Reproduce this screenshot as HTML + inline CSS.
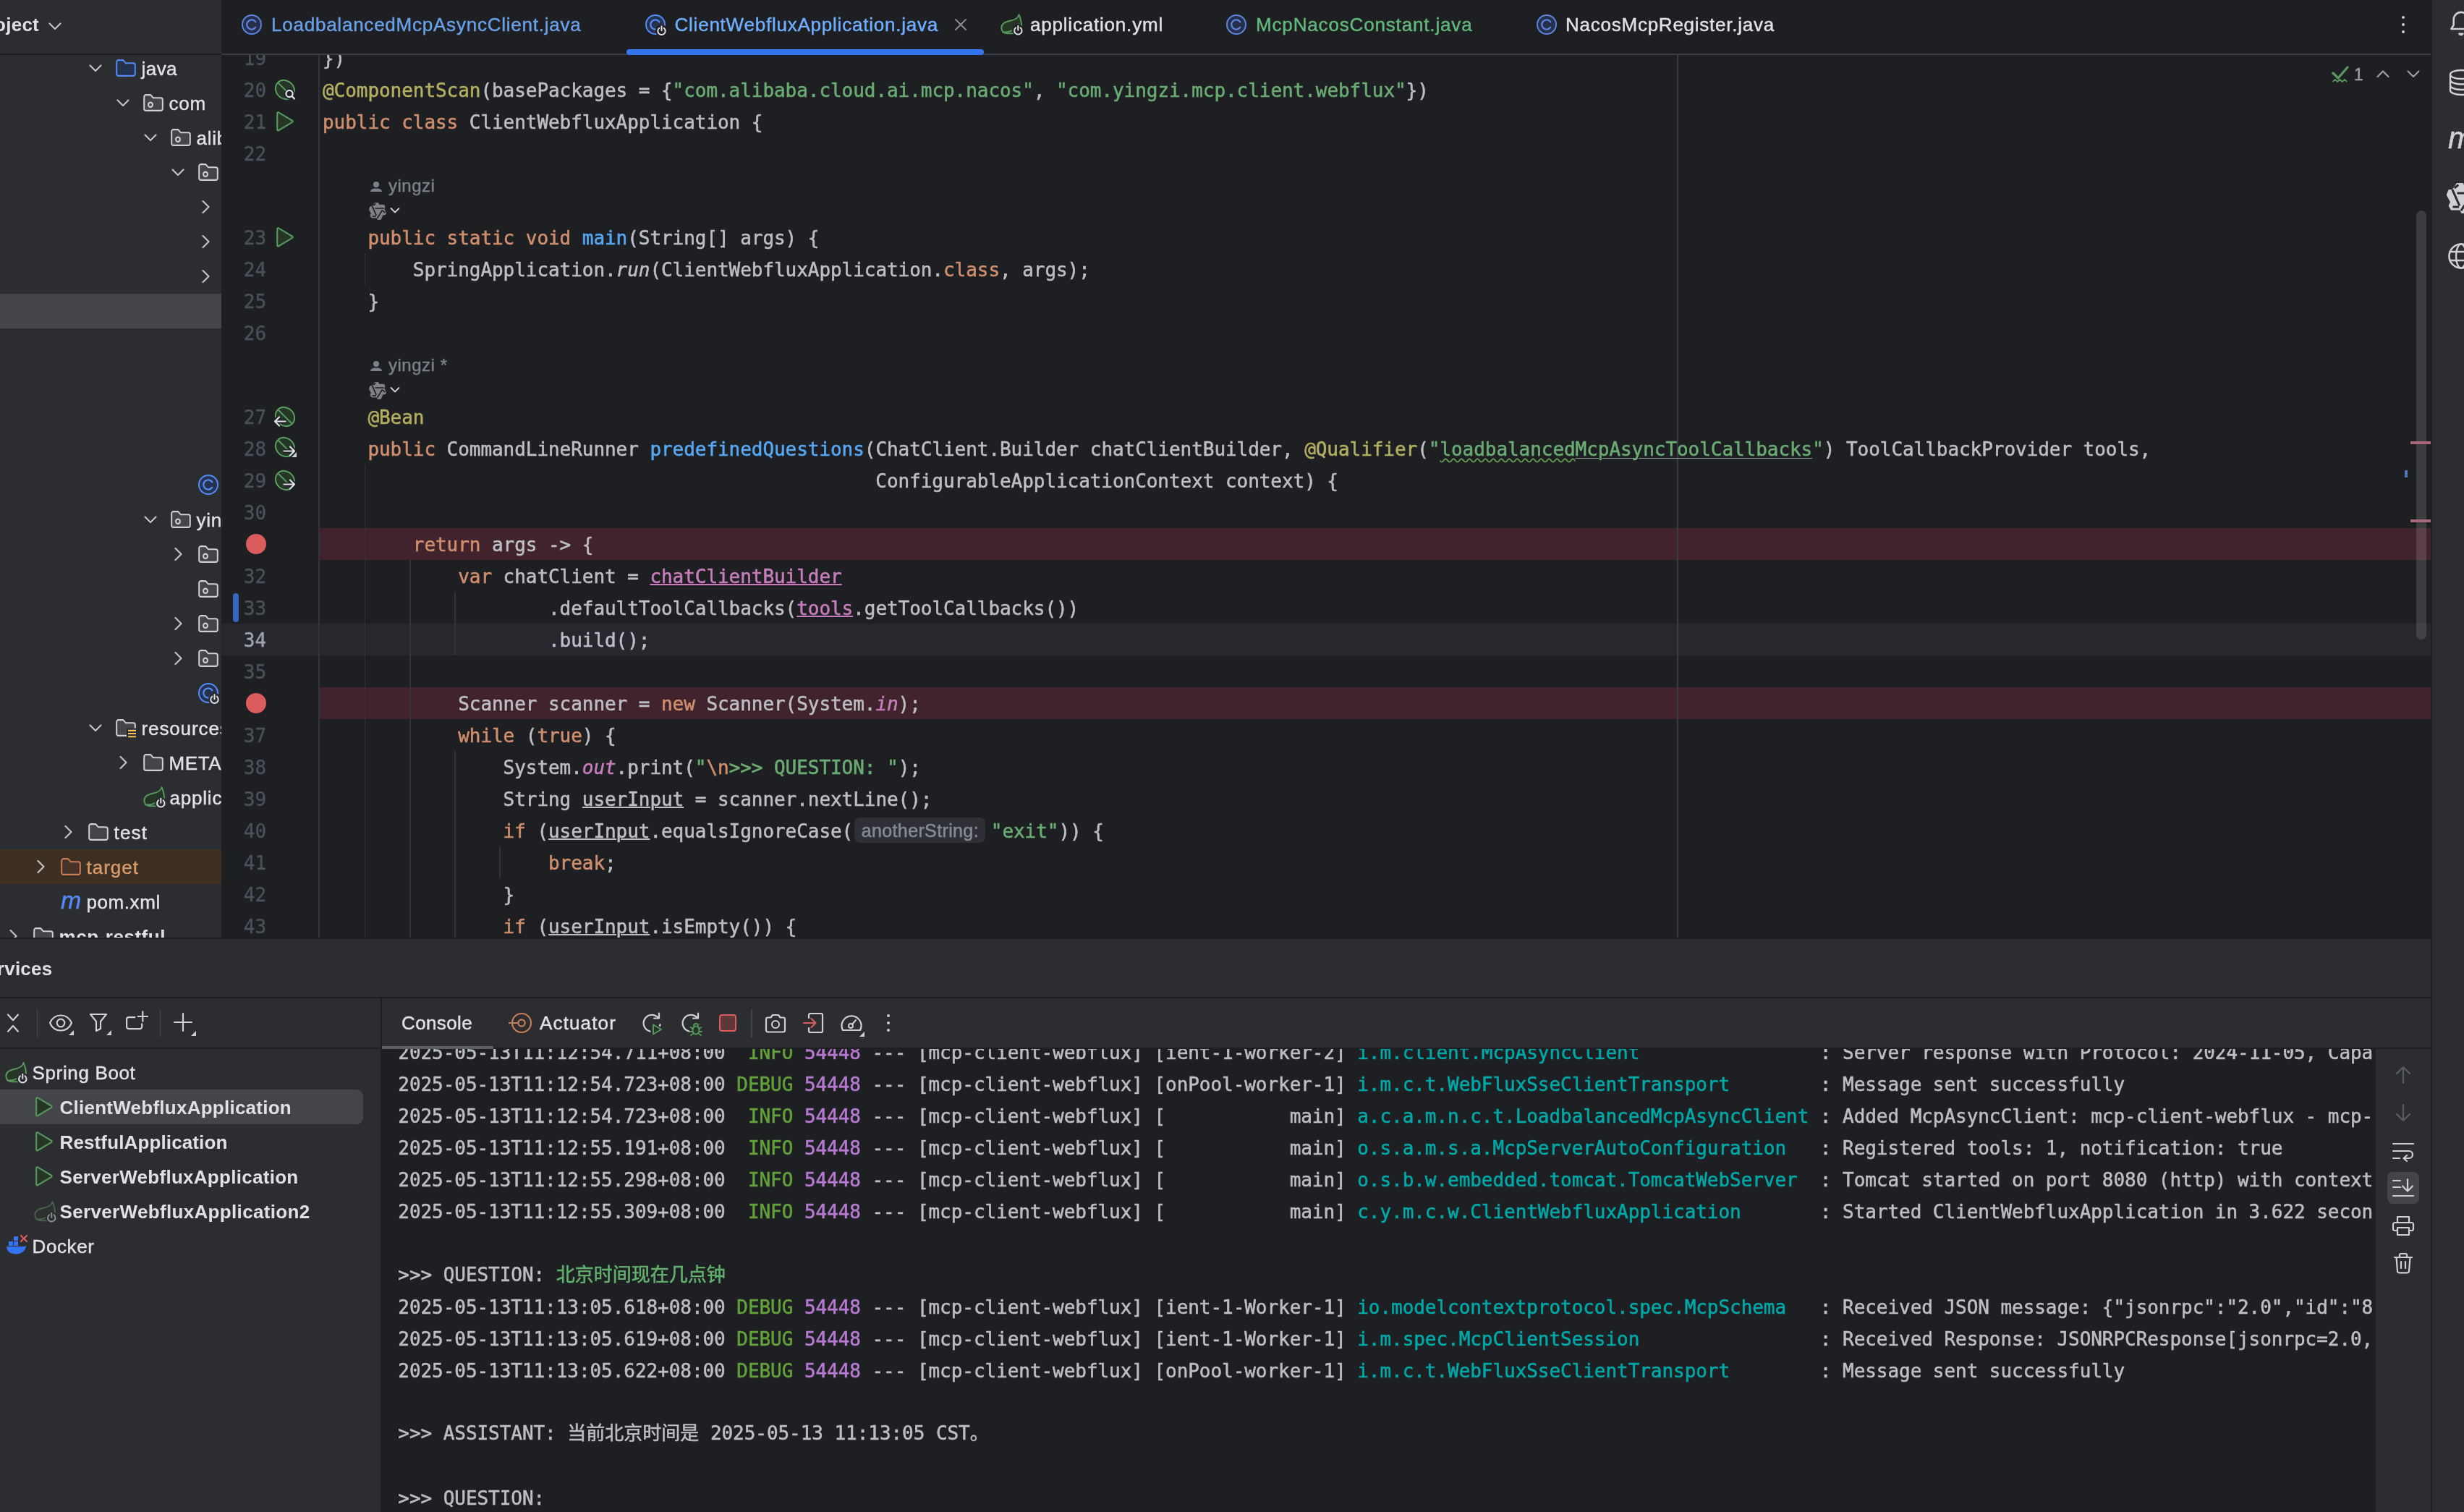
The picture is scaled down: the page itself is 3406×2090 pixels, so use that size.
<!DOCTYPE html><html><head><meta charset="utf-8"><title>IDE</title><style>
html,body{margin:0;padding:0;background:#1e1f22;}
body{width:3406px;height:2090px;position:relative;overflow:hidden;font-family:'Liberation Sans','Noto Sans CJK SC',sans-serif;will-change:transform;}
.t{position:absolute;white-space:pre;font-family:'Liberation Sans','Noto Sans CJK SC',sans-serif;-webkit-text-stroke:0.45px;}
.m{position:absolute;white-space:pre;font-family:'DejaVu Sans Mono','Liberation Mono','Noto Sans CJK SC',monospace;font-size:26px;line-height:44px;letter-spacing:-0.054px;color:#bcbec4;height:44px;-webkit-text-stroke:0.55px;}
.ln{position:absolute;white-space:pre;font-family:'DejaVu Sans Mono','Liberation Mono','Noto Sans CJK SC',monospace;font-size:26px;line-height:44px;letter-spacing:-0.054px;color:#4b5059;width:62px;text-align:right;left:306px;height:44px;-webkit-text-stroke:0.4px;}
.k{color:#cf8e6d}.s{color:#6aab73}.a{color:#b3ae60}.f{color:#56a8f5}.p{color:#c77dbb}.i{font-style:italic}
.u{text-decoration:underline;text-decoration-thickness:1.5px;text-underline-offset:1px}
.lv{color:#62a03a}.pid{color:#b57ad0}.lg{color:#00a8a8}.in{color:#62b06e}
.clip{position:absolute;overflow:hidden;}
</style></head><body>
<div class="clip" style="left:0;top:0;width:306px;height:1296px;background:#2b2d30">
<div style="position:absolute;left:0px;top:74px;width:306px;height:1.5px;background:#1e1f22;"></div>
<span class="t" style="left:-35.9px;top:17.3px;font-size:26px;line-height:34px;color:#dfe1e5;font-weight:700;-webkit-text-stroke:0;letter-spacing:0.250px;">Project</span>
<svg style="position:absolute;left:66px;top:26px;" width="20" height="20" viewBox="0 0 20 20" fill="none"><path d="M2.5 6.5 L10 14 L17.5 6.5" stroke="#c0c3ca" stroke-width="2.2" stroke-linecap="round" stroke-linejoin="round"/></svg>
<div style="position:absolute;left:0px;top:406px;width:306px;height:48px;background:#43454a;"></div>
<div style="position:absolute;left:0px;top:1174.2px;width:306px;height:48px;background:#3d3023;"></div>
<svg style="position:absolute;left:122px;top:84.2px;" width="20" height="20" viewBox="0 0 20 20" fill="none"><path d="M2.5 6.5 L10 14 L17.5 6.5" stroke="#c0c3ca" stroke-width="2.2" stroke-linecap="round" stroke-linejoin="round"/></svg>
<svg style="position:absolute;left:160px;top:80.7px;" width="30" height="27.4" viewBox="0 0 30 26" fill="none" preserveAspectRatio="none"><path d="M1.2 4.5 a2.5 2.5 0 0 1 2.5 -2.5 h5.6 a2.5 2.5 0 0 1 1.9 .9 l2.6 3.1 h10.5 a2.5 2.5 0 0 1 2.5 2.5 v11.7 a2.5 2.5 0 0 1 -2.5 2.5 h-20.6 a2.5 2.5 0 0 1 -2.5 -2.5 z" fill="#25324d" stroke="#548af7" stroke-width="2"/></svg>
<span class="t" style="left:195.5px;top:77.5px;font-size:26px;line-height:34px;color:#dfe1e5;letter-spacing:0.449px;">java</span>
<svg style="position:absolute;left:160px;top:132.2px;" width="20" height="20" viewBox="0 0 20 20" fill="none"><path d="M2.5 6.5 L10 14 L17.5 6.5" stroke="#c0c3ca" stroke-width="2.2" stroke-linecap="round" stroke-linejoin="round"/></svg>
<svg style="position:absolute;left:198px;top:128.7px;" width="30" height="27.4" viewBox="0 0 30 26" fill="none" preserveAspectRatio="none"><path d="M1.2 4.5 a2.5 2.5 0 0 1 2.5 -2.5 h5.6 a2.5 2.5 0 0 1 1.9 .9 l2.6 3.1 h10.5 a2.5 2.5 0 0 1 2.5 2.5 v11.7 a2.5 2.5 0 0 1 -2.5 2.5 h-20.6 a2.5 2.5 0 0 1 -2.5 -2.5 z" fill="#43454a" stroke="#ced0d6" stroke-width="2"/><circle cx="10" cy="15" r="3" stroke="#ced0d6" stroke-width="2" fill="none"/></svg>
<span class="t" style="left:233.5px;top:125.5px;font-size:26px;line-height:34px;color:#dfe1e5;letter-spacing:0.708px;">com</span>
<svg style="position:absolute;left:198px;top:180.2px;" width="20" height="20" viewBox="0 0 20 20" fill="none"><path d="M2.5 6.5 L10 14 L17.5 6.5" stroke="#c0c3ca" stroke-width="2.2" stroke-linecap="round" stroke-linejoin="round"/></svg>
<svg style="position:absolute;left:236px;top:176.7px;" width="30" height="27.4" viewBox="0 0 30 26" fill="none" preserveAspectRatio="none"><path d="M1.2 4.5 a2.5 2.5 0 0 1 2.5 -2.5 h5.6 a2.5 2.5 0 0 1 1.9 .9 l2.6 3.1 h10.5 a2.5 2.5 0 0 1 2.5 2.5 v11.7 a2.5 2.5 0 0 1 -2.5 2.5 h-20.6 a2.5 2.5 0 0 1 -2.5 -2.5 z" fill="#43454a" stroke="#ced0d6" stroke-width="2"/><circle cx="10" cy="15" r="3" stroke="#ced0d6" stroke-width="2" fill="none"/></svg>
<span class="t" style="left:271.5px;top:173.5px;font-size:26px;line-height:34px;color:#dfe1e5;letter-spacing:0.700px;">alib</span>
<svg style="position:absolute;left:236px;top:228.2px;" width="20" height="20" viewBox="0 0 20 20" fill="none"><path d="M2.5 6.5 L10 14 L17.5 6.5" stroke="#c0c3ca" stroke-width="2.2" stroke-linecap="round" stroke-linejoin="round"/></svg>
<svg style="position:absolute;left:274px;top:224.7px;" width="30" height="27.4" viewBox="0 0 30 26" fill="none" preserveAspectRatio="none"><path d="M1.2 4.5 a2.5 2.5 0 0 1 2.5 -2.5 h5.6 a2.5 2.5 0 0 1 1.9 .9 l2.6 3.1 h10.5 a2.5 2.5 0 0 1 2.5 2.5 v11.7 a2.5 2.5 0 0 1 -2.5 2.5 h-20.6 a2.5 2.5 0 0 1 -2.5 -2.5 z" fill="#43454a" stroke="#ced0d6" stroke-width="2"/><circle cx="10" cy="15" r="3" stroke="#ced0d6" stroke-width="2" fill="none"/></svg>
<svg style="position:absolute;left:274px;top:276.2px;" width="20" height="20" viewBox="0 0 20 20" fill="none"><path d="M6.5 2 L14.5 10 L6.5 18" stroke="#c0c3ca" stroke-width="2.2" stroke-linecap="round" stroke-linejoin="round"/></svg>
<svg style="position:absolute;left:274px;top:324.2px;" width="20" height="20" viewBox="0 0 20 20" fill="none"><path d="M6.5 2 L14.5 10 L6.5 18" stroke="#c0c3ca" stroke-width="2.2" stroke-linecap="round" stroke-linejoin="round"/></svg>
<svg style="position:absolute;left:274px;top:372.2px;" width="20" height="20" viewBox="0 0 20 20" fill="none"><path d="M6.5 2 L14.5 10 L6.5 18" stroke="#c0c3ca" stroke-width="2.2" stroke-linecap="round" stroke-linejoin="round"/></svg>
<svg style="position:absolute;left:198px;top:708.2px;" width="20" height="20" viewBox="0 0 20 20" fill="none"><path d="M2.5 6.5 L10 14 L17.5 6.5" stroke="#c0c3ca" stroke-width="2.2" stroke-linecap="round" stroke-linejoin="round"/></svg>
<svg style="position:absolute;left:236px;top:704.7px;" width="30" height="27.4" viewBox="0 0 30 26" fill="none" preserveAspectRatio="none"><path d="M1.2 4.5 a2.5 2.5 0 0 1 2.5 -2.5 h5.6 a2.5 2.5 0 0 1 1.9 .9 l2.6 3.1 h10.5 a2.5 2.5 0 0 1 2.5 2.5 v11.7 a2.5 2.5 0 0 1 -2.5 2.5 h-20.6 a2.5 2.5 0 0 1 -2.5 -2.5 z" fill="#43454a" stroke="#ced0d6" stroke-width="2"/><circle cx="10" cy="15" r="3" stroke="#ced0d6" stroke-width="2" fill="none"/></svg>
<span class="t" style="left:271.5px;top:701.5px;font-size:26px;line-height:34px;color:#dfe1e5;letter-spacing:0.700px;">yin</span>
<svg style="position:absolute;left:236px;top:756.2px;" width="20" height="20" viewBox="0 0 20 20" fill="none"><path d="M6.5 2 L14.5 10 L6.5 18" stroke="#c0c3ca" stroke-width="2.2" stroke-linecap="round" stroke-linejoin="round"/></svg>
<svg style="position:absolute;left:274px;top:752.7px;" width="30" height="27.4" viewBox="0 0 30 26" fill="none" preserveAspectRatio="none"><path d="M1.2 4.5 a2.5 2.5 0 0 1 2.5 -2.5 h5.6 a2.5 2.5 0 0 1 1.9 .9 l2.6 3.1 h10.5 a2.5 2.5 0 0 1 2.5 2.5 v11.7 a2.5 2.5 0 0 1 -2.5 2.5 h-20.6 a2.5 2.5 0 0 1 -2.5 -2.5 z" fill="#43454a" stroke="#ced0d6" stroke-width="2"/><circle cx="10" cy="15" r="3" stroke="#ced0d6" stroke-width="2" fill="none"/></svg>
<svg style="position:absolute;left:274px;top:800.7px;" width="30" height="27.4" viewBox="0 0 30 26" fill="none" preserveAspectRatio="none"><path d="M1.2 4.5 a2.5 2.5 0 0 1 2.5 -2.5 h5.6 a2.5 2.5 0 0 1 1.9 .9 l2.6 3.1 h10.5 a2.5 2.5 0 0 1 2.5 2.5 v11.7 a2.5 2.5 0 0 1 -2.5 2.5 h-20.6 a2.5 2.5 0 0 1 -2.5 -2.5 z" fill="#43454a" stroke="#ced0d6" stroke-width="2"/><circle cx="10" cy="15" r="3" stroke="#ced0d6" stroke-width="2" fill="none"/></svg>
<svg style="position:absolute;left:236px;top:852.2px;" width="20" height="20" viewBox="0 0 20 20" fill="none"><path d="M6.5 2 L14.5 10 L6.5 18" stroke="#c0c3ca" stroke-width="2.2" stroke-linecap="round" stroke-linejoin="round"/></svg>
<svg style="position:absolute;left:274px;top:848.7px;" width="30" height="27.4" viewBox="0 0 30 26" fill="none" preserveAspectRatio="none"><path d="M1.2 4.5 a2.5 2.5 0 0 1 2.5 -2.5 h5.6 a2.5 2.5 0 0 1 1.9 .9 l2.6 3.1 h10.5 a2.5 2.5 0 0 1 2.5 2.5 v11.7 a2.5 2.5 0 0 1 -2.5 2.5 h-20.6 a2.5 2.5 0 0 1 -2.5 -2.5 z" fill="#43454a" stroke="#ced0d6" stroke-width="2"/><circle cx="10" cy="15" r="3" stroke="#ced0d6" stroke-width="2" fill="none"/></svg>
<svg style="position:absolute;left:236px;top:900.2px;" width="20" height="20" viewBox="0 0 20 20" fill="none"><path d="M6.5 2 L14.5 10 L6.5 18" stroke="#c0c3ca" stroke-width="2.2" stroke-linecap="round" stroke-linejoin="round"/></svg>
<svg style="position:absolute;left:274px;top:896.7px;" width="30" height="27.4" viewBox="0 0 30 26" fill="none" preserveAspectRatio="none"><path d="M1.2 4.5 a2.5 2.5 0 0 1 2.5 -2.5 h5.6 a2.5 2.5 0 0 1 1.9 .9 l2.6 3.1 h10.5 a2.5 2.5 0 0 1 2.5 2.5 v11.7 a2.5 2.5 0 0 1 -2.5 2.5 h-20.6 a2.5 2.5 0 0 1 -2.5 -2.5 z" fill="#43454a" stroke="#ced0d6" stroke-width="2"/><circle cx="10" cy="15" r="3" stroke="#ced0d6" stroke-width="2" fill="none"/></svg>
<svg style="position:absolute;left:122px;top:996.2px;" width="20" height="20" viewBox="0 0 20 20" fill="none"><path d="M2.5 6.5 L10 14 L17.5 6.5" stroke="#c0c3ca" stroke-width="2.2" stroke-linecap="round" stroke-linejoin="round"/></svg>
<svg style="position:absolute;left:160px;top:992.7px;" width="30" height="27.4" viewBox="0 0 30 26" fill="none" preserveAspectRatio="none"><path d="M1.2 4.5 a2.5 2.5 0 0 1 2.5 -2.5 h5.6 a2.5 2.5 0 0 1 1.9 .9 l2.6 3.1 h10.5 a2.5 2.5 0 0 1 2.5 2.5 v11.7 a2.5 2.5 0 0 1 -2.5 2.5 h-20.6 a2.5 2.5 0 0 1 -2.5 -2.5 z" fill="#43454a" stroke="#ced0d6" stroke-width="2"/><rect x="15" y="13" width="14" height="12" fill="#2b2d30"/><path d="M17 16h11M17 20h11M17 24h11" stroke="#f2c55c" stroke-width="2"/></svg>
<span class="t" style="left:195.5px;top:989.5px;font-size:26px;line-height:34px;color:#dfe1e5;letter-spacing:0.883px;">resources</span>
<svg style="position:absolute;left:160px;top:1044.2px;" width="20" height="20" viewBox="0 0 20 20" fill="none"><path d="M6.5 2 L14.5 10 L6.5 18" stroke="#c0c3ca" stroke-width="2.2" stroke-linecap="round" stroke-linejoin="round"/></svg>
<svg style="position:absolute;left:198px;top:1040.7px;" width="30" height="27.4" viewBox="0 0 30 26" fill="none" preserveAspectRatio="none"><path d="M1.2 4.5 a2.5 2.5 0 0 1 2.5 -2.5 h5.6 a2.5 2.5 0 0 1 1.9 .9 l2.6 3.1 h10.5 a2.5 2.5 0 0 1 2.5 2.5 v11.7 a2.5 2.5 0 0 1 -2.5 2.5 h-20.6 a2.5 2.5 0 0 1 -2.5 -2.5 z" fill="#43454a" stroke="#ced0d6" stroke-width="2"/></svg>
<span class="t" style="left:233.5px;top:1037.5px;font-size:26px;line-height:34px;color:#dfe1e5;letter-spacing:0.595px;">META-INF</span>
<svg style="position:absolute;left:84px;top:1140.2px;" width="20" height="20" viewBox="0 0 20 20" fill="none"><path d="M6.5 2 L14.5 10 L6.5 18" stroke="#c0c3ca" stroke-width="2.2" stroke-linecap="round" stroke-linejoin="round"/></svg>
<svg style="position:absolute;left:122px;top:1136.7px;" width="30" height="27.4" viewBox="0 0 30 26" fill="none" preserveAspectRatio="none"><path d="M1.2 4.5 a2.5 2.5 0 0 1 2.5 -2.5 h5.6 a2.5 2.5 0 0 1 1.9 .9 l2.6 3.1 h10.5 a2.5 2.5 0 0 1 2.5 2.5 v11.7 a2.5 2.5 0 0 1 -2.5 2.5 h-20.6 a2.5 2.5 0 0 1 -2.5 -2.5 z" fill="#43454a" stroke="#ced0d6" stroke-width="2"/></svg>
<span class="t" style="left:157.5px;top:1133.5px;font-size:26px;line-height:34px;color:#dfe1e5;letter-spacing:1.207px;">test</span>
<svg style="position:absolute;left:46px;top:1188.2px;" width="20" height="20" viewBox="0 0 20 20" fill="none"><path d="M6.5 2 L14.5 10 L6.5 18" stroke="#c0c3ca" stroke-width="2.2" stroke-linecap="round" stroke-linejoin="round"/></svg>
<svg style="position:absolute;left:84px;top:1184.7px;" width="30" height="27.4" viewBox="0 0 30 26" fill="none" preserveAspectRatio="none"><path d="M1.2 4.5 a2.5 2.5 0 0 1 2.5 -2.5 h5.6 a2.5 2.5 0 0 1 1.9 .9 l2.6 3.1 h10.5 a2.5 2.5 0 0 1 2.5 2.5 v11.7 a2.5 2.5 0 0 1 -2.5 2.5 h-20.6 a2.5 2.5 0 0 1 -2.5 -2.5 z" fill="#45322b" stroke="#c77d55" stroke-width="2"/></svg>
<span class="t" style="left:119.5px;top:1181.5px;font-size:26px;line-height:34px;color:#d69a6b;letter-spacing:1.000px;">target</span>
<svg style="position:absolute;left:8px;top:1284.2px;" width="20" height="20" viewBox="0 0 20 20" fill="none"><path d="M6.5 2 L14.5 10 L6.5 18" stroke="#c0c3ca" stroke-width="2.2" stroke-linecap="round" stroke-linejoin="round"/></svg>
<svg style="position:absolute;left:46px;top:1280.7px;" width="30" height="27.4" viewBox="0 0 30 26" fill="none" preserveAspectRatio="none"><path d="M1.2 4.5 a2.5 2.5 0 0 1 2.5 -2.5 h5.6 a2.5 2.5 0 0 1 1.9 .9 l2.6 3.1 h10.5 a2.5 2.5 0 0 1 2.5 2.5 v11.7 a2.5 2.5 0 0 1 -2.5 2.5 h-20.6 a2.5 2.5 0 0 1 -2.5 -2.5 z" fill="#43454a" stroke="#ced0d6" stroke-width="2"/></svg>
<span class="t" style="left:81.5px;top:1277.5px;font-size:26px;line-height:34px;color:#dfe1e5;font-weight:700;-webkit-text-stroke:0;letter-spacing:0.538px;">mcp-restful</span>
<svg style="position:absolute;left:273px;top:655.2px;" width="34" height="34" viewBox="0 0 34 34" fill="none"><circle cx="15" cy="15" r="13" fill="#25324d" stroke="#548af7" stroke-width="2"/><path d="M20.3 11.3 a6.6 6.6 0 1 0 0 7.4" stroke="#548af7" stroke-width="2.3" stroke-linecap="round" fill="none"/></svg>
<svg style="position:absolute;left:273px;top:943.2px;" width="34" height="34" viewBox="0 0 34 34" fill="none"><circle cx="15" cy="15" r="13" fill="#25324d" stroke="#548af7" stroke-width="2"/><path d="M20.3 11.3 a6.6 6.6 0 1 0 0 7.4" stroke="#548af7" stroke-width="2.3" stroke-linecap="round" fill="none"/><circle cx="23.5" cy="23.5" r="8.5" fill="#2b2d30"/><path d="M20.3 19.8 a5.2 5.2 0 1 0 6.4 0 M23.5 17.2 v6" stroke="#dfe1e5" stroke-width="2" stroke-linecap="round" fill="none"/></svg>
<svg style="position:absolute;left:197px;top:1086.2px;" width="34" height="34" viewBox="0 0 34 34" fill="none"><path d="M26.6 2.1 C25.5 7 22 9 15 10.5 C7 12 2.3 15.5 2.3 20.5 C2.3 25.5 6 28.3 11 28.3 L20 28.3 L30 17 C30 11 28.5 7 26.600 2.100 Z" fill="#253627" stroke="#57965c" stroke-width="2" stroke-linejoin="round"/><path d="M4 26.3 C8 27 13 26 17.5 23.8" stroke="#57965c" stroke-width="2" stroke-linecap="round" fill="none"/><circle cx="25.3" cy="24" r="8.3" fill="#2b2d30"/><path d="M22.1 20.3 a5.2 5.2 0 1 0 6.4 0 M25.3 17.7 v6" stroke="#dfe1e5" stroke-width="2" stroke-linecap="round" fill="none"/></svg>
<span class="t" style="left:234.5px;top:1085.5px;font-size:26px;line-height:34px;color:#dfe1e5;letter-spacing:0.801px;">application.yml</span>
<span class="t" style="left:84.0px;top:1222.2px;font-size:34px;line-height:44px;color:#548af7;font-style:italic;letter-spacing:0.915px;font-family:'Liberation Sans';">m</span>
<span class="t" style="left:119.5px;top:1229.5px;font-size:26px;line-height:34px;color:#dfe1e5;letter-spacing:0.571px;">pom.xml</span>
</div>
<div class="clip" style="left:306px;top:0;width:3054px;height:76px;background:#1e1f22">
<div style="position:absolute;left:0px;top:74px;width:3054px;height:1.5px;background:#393b40;"></div>
</div>
<svg style="position:absolute;left:333px;top:19px;" width="34" height="34" viewBox="0 0 34 34" fill="none"><circle cx="15" cy="15" r="13" fill="#262f4a" stroke="#5c84dc" stroke-width="2"/><path d="M20.3 11.3 a6.6 6.6 0 1 0 0 7.4" stroke="#5c84dc" stroke-width="2.3" stroke-linecap="round" fill="none"/></svg>
<span class="t" style="left:375.0px;top:17.3px;font-size:26px;line-height:34px;color:#69a0e8;letter-spacing:0.768px;">LoadbalancedMcpAsyncClient.java</span>
<svg style="position:absolute;left:891px;top:19px;" width="34" height="34" viewBox="0 0 34 34" fill="none"><circle cx="15" cy="15" r="13" fill="#25324d" stroke="#548af7" stroke-width="2"/><path d="M20.3 11.3 a6.6 6.6 0 1 0 0 7.4" stroke="#548af7" stroke-width="2.3" stroke-linecap="round" fill="none"/><circle cx="23.5" cy="23.5" r="8.5" fill="#1e1f22"/><path d="M20.3 19.8 a5.2 5.2 0 1 0 6.4 0 M23.5 17.2 v6" stroke="#dfe1e5" stroke-width="2" stroke-linecap="round" fill="none"/></svg>
<span class="t" style="left:932.5px;top:17.3px;font-size:26px;line-height:34px;color:#70aeff;letter-spacing:0.774px;">ClientWebfluxApplication.java</span>
<svg style="position:absolute;left:1319px;top:25px;" width="18" height="18" viewBox="0 0 18 18" fill="none"><path d="M2 2 L16 16 M16 2 L2 16" stroke="#868a91" stroke-width="2" stroke-linecap="round"/></svg>
<div style="position:absolute;left:866px;top:68px;width:494px;height:8px;background:#3574f0;border-radius:4px;"></div>
<svg style="position:absolute;left:1382px;top:18px;" width="34" height="34" viewBox="0 0 34 34" fill="none"><path d="M26.6 2.1 C25.5 7 22 9 15 10.5 C7 12 2.3 15.5 2.3 20.5 C2.3 25.5 6 28.3 11 28.3 L20 28.3 L30 17 C30 11 28.5 7 26.600 2.100 Z" fill="#253627" stroke="#57965c" stroke-width="2" stroke-linejoin="round"/><path d="M4 26.3 C8 27 13 26 17.5 23.8" stroke="#57965c" stroke-width="2" stroke-linecap="round" fill="none"/><circle cx="25.3" cy="24" r="8.3" fill="#1e1f22"/><path d="M22.1 20.3 a5.2 5.2 0 1 0 6.4 0 M25.3 17.7 v6" stroke="#dfe1e5" stroke-width="2" stroke-linecap="round" fill="none"/></svg>
<span class="t" style="left:1424.0px;top:17.3px;font-size:26px;line-height:34px;color:#dfe1e5;letter-spacing:0.801px;">application.yml</span>
<svg style="position:absolute;left:1694px;top:19px;" width="34" height="34" viewBox="0 0 34 34" fill="none"><circle cx="15" cy="15" r="13" fill="#262f4a" stroke="#5c84dc" stroke-width="2"/><path d="M20.3 11.3 a6.6 6.6 0 1 0 0 7.4" stroke="#5c84dc" stroke-width="2.3" stroke-linecap="round" fill="none"/></svg>
<span class="t" style="left:1736.0px;top:17.3px;font-size:26px;line-height:34px;color:#62b87b;letter-spacing:0.842px;">McpNacosConstant.java</span>
<svg style="position:absolute;left:2123px;top:19px;" width="34" height="34" viewBox="0 0 34 34" fill="none"><circle cx="15" cy="15" r="13" fill="#262f4a" stroke="#5c84dc" stroke-width="2"/><path d="M20.3 11.3 a6.6 6.6 0 1 0 0 7.4" stroke="#5c84dc" stroke-width="2.3" stroke-linecap="round" fill="none"/></svg>
<span class="t" style="left:2164.0px;top:17.3px;font-size:26px;line-height:34px;color:#dfe1e5;letter-spacing:0.756px;">NacosMcpRegister.java</span>
<div style="position:absolute;left:3319.8px;top:22.1px;width:4.4px;height:4.4px;background:#ced0d6;border-radius:50%;"></div>
<div style="position:absolute;left:3319.8px;top:31.8px;width:4.4px;height:4.4px;background:#ced0d6;border-radius:50%;"></div>
<div style="position:absolute;left:3319.8px;top:41.5px;width:4.4px;height:4.4px;background:#ced0d6;border-radius:50%;"></div>
<div class="clip" style="left:306px;top:76px;width:3054px;height:1221px;background:#1e1f22">
<div style="position:absolute;left:0px;top:786px;width:3054px;height:44px;background:#26282e;"></div>
<div style="position:absolute;left:134.5px;top:654px;width:2920px;height:44px;background:#41232d;"></div>
<div style="position:absolute;left:134.5px;top:874px;width:2920px;height:44px;background:#41232d;"></div>
<div style="position:absolute;left:134px;top:0px;width:1.5px;height:1221px;background:#313438;"></div>
<div style="position:absolute;left:2012.3000000000002px;top:0px;width:1.5px;height:1221px;background:#3b3d42;"></div>
<div style="position:absolute;left:197.8px;top:274px;width:1.5px;height:44px;background:#2f3237;"></div>
<div style="position:absolute;left:197.8px;top:566px;width:1.5px;height:660px;background:#2f3237;"></div>
<div style="position:absolute;left:260.0px;top:698px;width:1.5px;height:528px;background:#2f3237;"></div>
<div style="position:absolute;left:322.20000000000005px;top:742px;width:1.5px;height:88px;background:#2f3237;"></div>
<div style="position:absolute;left:322.20000000000005px;top:962px;width:1.5px;height:264px;background:#2f3237;"></div>
<div style="position:absolute;left:384.4000000000001px;top:1094px;width:1.5px;height:44px;background:#2f3237;"></div>
<div style="position:absolute;left:16px;top:744px;width:8px;height:40px;background:#3765c0;border-radius:4px;"></div>
<div class="m" style="left:140px;top:-17.5px">})</div>
<div class="m" style="left:140px;top:26.5px"><span class="a">@ComponentScan</span>(basePackages = {<span class="s">"com.alibaba.cloud.ai.mcp.nacos"</span>, <span class="s">"com.yingzi.mcp.client.webflux"</span>})</div>
<div class="m" style="left:140px;top:70.5px"><span class="k">public class </span>ClientWebfluxApplication {</div>
<div class="m" style="left:140px;top:230.5px">    <span class="k">public static void </span><span class="f">main</span>(String[] args) {</div>
<div class="m" style="left:140px;top:274.5px">        SpringApplication.<span class="i">run</span>(ClientWebfluxApplication.<span class="k">class</span>, args);</div>
<div class="m" style="left:140px;top:318.5px">    }</div>
<div class="m" style="left:140px;top:478.5px">    <span class="a">@Bean</span></div>
<div class="m" style="left:140px;top:522.5px">    <span class="k">public </span>CommandLineRunner <span class="f">predefinedQuestions</span>(ChatClient.Builder chatClientBuilder, <span class="a">@Qualifier</span>(<span class="s">"</span><span class="s u" style="text-decoration-style:wavy;text-decoration-thickness:1.6px;text-decoration-color:#5f9a55;text-underline-offset:2.5px">loadbalanced</span><span class="s u" style="text-decoration-color:#8c9a90;text-decoration-thickness:1.2px;text-underline-offset:3px">McpAsyncToolCallbacks</span><span class="s">"</span>) ToolCallbackProvider tools,</div>
<div class="m" style="left:140px;top:566.5px">                                                 ConfigurableApplicationContext context) {</div>
<div class="m" style="left:140px;top:654.5px">        <span class="k">return </span>args -&gt; {</div>
<div class="m" style="left:140px;top:698.5px">            <span class="k">var </span>chatClient = <span class="p u">chatClientBuilder</span></div>
<div class="m" style="left:140px;top:742.5px">                    .defaultToolCallbacks(<span class="p u">tools</span>.getToolCallbacks())</div>
<div class="m" style="left:140px;top:786.5px">                    .build();</div>
<div class="m" style="left:140px;top:874.5px">            Scanner scanner = <span class="k">new </span>Scanner(System.<span class="p i">in</span>);</div>
<div class="m" style="left:140px;top:918.5px">            <span class="k">while </span>(<span class="k">true</span>) {</div>
<div class="m" style="left:140px;top:962.5px">                System.<span class="p i">out</span>.print(<span class="s">"</span><span class="k">\n</span><span class="s">&gt;&gt;&gt; QUESTION: "</span>);</div>
<div class="m" style="left:140px;top:1006.5px">                String <span class="u">userInput</span> = scanner.nextLine();</div>
<div class="m" style="left:140px;top:1050.5px">                <span class="k">if </span>(<span class="u">userInput</span>.equalsIgnoreCase(<span style="display:inline-block;width:190.6px;height:44px;vertical-align:top;position:relative"><span style="position:absolute;left:2px;top:3.5px;width:180.5px;height:35px;border-radius:8px;background:#2e3035"></span><span style="position:absolute;left:11.5px;top:-1px;font-family:'Liberation Sans',sans-serif;font-size:25px;letter-spacing:0.37px;color:#868a91;line-height:44px">anotherString:</span></span><span class="s">"exit"</span>)) {</div>
<div class="m" style="left:140px;top:1094.5px">                    <span class="k">break</span>;</div>
<div class="m" style="left:140px;top:1138.5px">                }</div>
<div class="m" style="left:140px;top:1182.5px">                <span class="k">if </span>(<span class="u">userInput</span>.isEmpty()) {</div>
<div class="ln" style="left:0;top:-17.5px;color:#4b5059">19</div>
<div class="ln" style="left:0;top:26.5px;color:#4b5059">20</div>
<div class="ln" style="left:0;top:70.5px;color:#4b5059">21</div>
<div class="ln" style="left:0;top:114.5px;color:#4b5059">22</div>
<div class="ln" style="left:0;top:230.5px;color:#4b5059">23</div>
<div class="ln" style="left:0;top:274.5px;color:#4b5059">24</div>
<div class="ln" style="left:0;top:318.5px;color:#4b5059">25</div>
<div class="ln" style="left:0;top:362.5px;color:#4b5059">26</div>
<div class="ln" style="left:0;top:478.5px;color:#4b5059">27</div>
<div class="ln" style="left:0;top:522.5px;color:#4b5059">28</div>
<div class="ln" style="left:0;top:566.5px;color:#4b5059">29</div>
<div class="ln" style="left:0;top:610.5px;color:#4b5059">30</div>
<div class="ln" style="left:0;top:698.5px;color:#4b5059">32</div>
<div class="ln" style="left:0;top:742.5px;color:#4b5059">33</div>
<div class="ln" style="left:0;top:786.5px;color:#a1a3ab">34</div>
<div class="ln" style="left:0;top:830.5px;color:#4b5059">35</div>
<div class="ln" style="left:0;top:918.5px;color:#4b5059">37</div>
<div class="ln" style="left:0;top:962.5px;color:#4b5059">38</div>
<div class="ln" style="left:0;top:1006.5px;color:#4b5059">39</div>
<div class="ln" style="left:0;top:1050.5px;color:#4b5059">40</div>
<div class="ln" style="left:0;top:1094.5px;color:#4b5059">41</div>
<div class="ln" style="left:0;top:1138.5px;color:#4b5059">42</div>
<div class="ln" style="left:0;top:1182.5px;color:#4b5059">43</div>
<div style="position:absolute;left:34px;top:662px;width:28px;height:28px;background:#db5c5c;border-radius:50%;"></div>
<div style="position:absolute;left:34px;top:882px;width:28px;height:28px;background:#db5c5c;border-radius:50%;"></div>
</div>
<svg style="position:absolute;left:378px;top:109px;" width="34" height="32" viewBox="0 0 34 32" fill="none"><g transform="translate(16,15) rotate(45)"><ellipse rx="14" ry="12.2" fill="#253627" stroke="#5a9e60" stroke-width="2"/><path d="M-14 0 H14" stroke="#5a9e60" stroke-width="2"/></g><circle cx="22.5" cy="21" r="7.5" fill="#1e1f22"/><circle cx="22" cy="20.5" r="4.6" stroke="#dfe1e5" stroke-width="2.2" fill="none"/><path d="M25.5 24 L29 27.5" stroke="#dfe1e5" stroke-width="2.4" stroke-linecap="round"/></svg>
<svg style="position:absolute;left:379.8px;top:152.8px;" width="27.5" height="29.6" viewBox="0 0 26 28" fill="none"><path d="M3 3.2 a1.2 1.2 0 0 1 1.8 -1 l18 10.8 a1.2 1.2 0 0 1 0 2 l-18 10.8 a1.2 1.2 0 0 1 -1.8 -1 z" fill="#253627" stroke="#57965c" stroke-width="2" stroke-linejoin="round"/></svg>
<svg style="position:absolute;left:379.8px;top:312.8px;" width="27.5" height="29.6" viewBox="0 0 26 28" fill="none"><path d="M3 3.2 a1.2 1.2 0 0 1 1.8 -1 l18 10.8 a1.2 1.2 0 0 1 0 2 l-18 10.8 a1.2 1.2 0 0 1 -1.8 -1 z" fill="#253627" stroke="#57965c" stroke-width="2" stroke-linejoin="round"/></svg>
<svg style="position:absolute;left:378px;top:561px;" width="34" height="32" viewBox="0 0 34 32" fill="none"><g transform="translate(16,15) rotate(45)"><ellipse rx="14" ry="12.2" fill="#253627" stroke="#5a9e60" stroke-width="2"/><path d="M-14 0 H14" stroke="#5a9e60" stroke-width="2"/></g><path d="M1 21.5 H17 M7.5 15.5 L1.5 21.5 L7.5 27.5" stroke="#1e1f22" stroke-width="5.5" fill="none"/><path d="M2 21.5 H16.5 M8 15.5 L2 21.5 L8 27.5" stroke="#dfe1e5" stroke-width="2.2" stroke-linecap="round" stroke-linejoin="round" fill="none"/></svg>
<svg style="position:absolute;left:378px;top:603px;" width="34" height="32" viewBox="0 0 34 32" fill="none"><g transform="translate(16,15) rotate(45)"><ellipse rx="14" ry="12.2" fill="#253627" stroke="#5a9e60" stroke-width="2"/><path d="M-14 0 H14" stroke="#5a9e60" stroke-width="2"/></g><path d="M14 20.5 H30 M23.5 14.5 L29.5 20.5 L23.5 26.5" stroke="#1e1f22" stroke-width="5.5" fill="none"/><path d="M14.5 20.5 H29 M23 14.5 L29 20.5 L23 26.5" stroke="#dfe1e5" stroke-width="2.2" stroke-linecap="round" stroke-linejoin="round" fill="none"/><path d="M25 29 H32 V22 Z" fill="#ced0d6"/></svg>
<svg style="position:absolute;left:378px;top:649px;" width="34" height="32" viewBox="0 0 34 32" fill="none"><g transform="translate(16,15) rotate(45)"><ellipse rx="14" ry="12.2" fill="#253627" stroke="#5a9e60" stroke-width="2"/><path d="M-14 0 H14" stroke="#5a9e60" stroke-width="2"/></g><path d="M14 20.5 H30 M23.5 14.5 L29.5 20.5 L23.5 26.5" stroke="#1e1f22" stroke-width="5.5" fill="none"/><path d="M14.5 20.5 H29 M23 14.5 L29 20.5 L23 26.5" stroke="#dfe1e5" stroke-width="2.2" stroke-linecap="round" stroke-linejoin="round" fill="none"/></svg>
<svg style="position:absolute;left:512px;top:249.5px;" width="16" height="18" viewBox="0 0 16 18" fill="none"><circle cx="8" cy="5" r="4" fill="#7c8088"/><path d="M0 15 c0-3.5 3.5-4.6 8-4.6 s8 1.100 8 4.600 z" fill="#7c8088"/></svg>
<span class="t" style="left:537.0px;top:240.7px;font-size:24px;line-height:31px;color:#7c8088;letter-spacing:0.507px;">yingzi</span>
<svg style="position:absolute;left:510px;top:280.0px;" width="24" height="24" viewBox="0 0 24 24" fill="none"><polygon points="8.3,0.2 12.6,0.2 14.0,3.1 21.0,3.3 22.1,5.5 21,8.5 23.8,15.0 22.1,16.9 19.3,16.9 16.2,23.6 12.1,23.8 10.7,21.0 3.6,21.0 1.9,17.9 3.3,15.0 0.2,9.3 1.9,5.5 4.8,5.5" fill="#808287" stroke="#808287" stroke-width="0.8" stroke-linejoin="round"/><path d="M8.3 8 H20.7 M4.5 5.2 L10.2 17.9 M18.3 10.7 L11.4 21.9 M4.8 18.9 H9.8 M18.3 10.7 L22.4 14 M6.2 4 L9.3 1.4" stroke="#1e1f22" stroke-width="1.7" fill="none"/></svg>
<svg style="position:absolute;left:538px;top:285px;" width="16" height="12" viewBox="0 0 16 12" fill="none"><path d="M2.5 3 L8 8.5 L13.5 3" stroke="#ced0d6" stroke-width="1.8" stroke-linecap="round" stroke-linejoin="round"/></svg>
<svg style="position:absolute;left:512px;top:497.5px;" width="16" height="18" viewBox="0 0 16 18" fill="none"><circle cx="8" cy="5" r="4" fill="#7c8088"/><path d="M0 15 c0-3.5 3.5-4.6 8-4.6 s8 1.100 8 4.600 z" fill="#7c8088"/></svg>
<span class="t" style="left:537.0px;top:488.7px;font-size:24px;line-height:31px;color:#7c8088;letter-spacing:0.516px;">yingzi *</span>
<svg style="position:absolute;left:510px;top:528.0px;" width="24" height="24" viewBox="0 0 24 24" fill="none"><polygon points="8.3,0.2 12.6,0.2 14.0,3.1 21.0,3.3 22.1,5.5 21,8.5 23.8,15.0 22.1,16.9 19.3,16.9 16.2,23.6 12.1,23.8 10.7,21.0 3.6,21.0 1.9,17.9 3.3,15.0 0.2,9.3 1.9,5.5 4.8,5.5" fill="#808287" stroke="#808287" stroke-width="0.8" stroke-linejoin="round"/><path d="M8.3 8 H20.7 M4.5 5.2 L10.2 17.9 M18.3 10.7 L11.4 21.9 M4.8 18.9 H9.8 M18.3 10.7 L22.4 14 M6.2 4 L9.3 1.4" stroke="#1e1f22" stroke-width="1.7" fill="none"/></svg>
<svg style="position:absolute;left:538px;top:533px;" width="16" height="12" viewBox="0 0 16 12" fill="none"><path d="M2.5 3 L8 8.5 L13.5 3" stroke="#ced0d6" stroke-width="1.8" stroke-linecap="round" stroke-linejoin="round"/></svg>
<svg style="position:absolute;left:3222px;top:90px;" width="28" height="28" viewBox="0 0 28 28" fill="none"><path d="M3 11 L10 18 L23 3" stroke="#57965c" stroke-width="3.4" stroke-linecap="round" stroke-linejoin="round"/><path d="M2.5 23 l3.3-3 l3.3 3 l3.3-3 l3.3 3 l3.3-3 l3.3 3" stroke="#57965c" stroke-width="1.8" fill="none"/></svg>
<span class="t" style="left:3254.0px;top:87.5px;font-size:23px;line-height:30px;color:#9da0a8;letter-spacing:0.619px;">1</span>
<svg style="position:absolute;left:3284px;top:92px;" width="20" height="20" viewBox="0 0 20 20" fill="none"><path d="M2.5 14 L10 6.5 L17.5 14" stroke="#9da0a8" stroke-width="2.2" stroke-linecap="round" stroke-linejoin="round"/></svg>
<svg style="position:absolute;left:3326px;top:92px;" width="20" height="20" viewBox="0 0 20 20" fill="none"><path d="M2.5 6.5 L10 14 L17.5 6.5" stroke="#9da0a8" stroke-width="2.2" stroke-linecap="round" stroke-linejoin="round"/></svg>
<div style="position:absolute;left:3340px;top:291px;width:14px;height:593px;background:rgba(255,255,255,0.13);border-radius:7px;"></div>
<div style="position:absolute;left:3332px;top:609.5px;width:28px;height:4.5px;background:#a8677b;"></div>
<div style="position:absolute;left:3332px;top:717.5px;width:28px;height:4.5px;background:#a8677b;"></div>
<div style="position:absolute;left:3324px;top:650px;width:4px;height:10px;background:#4d78b8;"></div>
<div style="position:absolute;left:3360px;top:0px;width:2px;height:2090px;background:#1e1f22;"></div>
<div style="position:absolute;left:3362px;top:0px;width:44px;height:2090px;background:#2b2d30;"></div>
<svg style="position:absolute;left:3381.5px;top:11px;" width="43" height="43" viewBox="0 0 40 40" fill="none"><path d="M6 27 L9 22 V15 a9.5 9.5 0 0 1 19 0 V22 L31 27 Z" stroke="#ced0d6" stroke-width="2.4" stroke-linejoin="round"/><path d="M15 32 a3.5 3.5 0 0 0 7 0" fill="#ced0d6"/></svg>
<svg style="position:absolute;left:3384px;top:95px;" width="40" height="40" viewBox="0 0 40 40" fill="none"><ellipse cx="18" cy="8" rx="15" ry="6" stroke="#ced0d6" stroke-width="2.4"/><path d="M3 8 V30 c0 3.3 6.7 6 15 6 s15-2.7 15-6 V8 M3 15.5 c0 3.3 6.7 6 15 6 s15-2.7 15-6 M3 23 c0 3.3 6.7 6 15 6 s15-2.7 15-6" stroke="#ced0d6" stroke-width="2.4"/></svg>
<span class="t" style="left:3384.0px;top:162.9px;font-size:42px;line-height:55px;color:#ced0d6;font-style:italic;letter-spacing:1.131px;">m</span>
<svg style="position:absolute;left:3382px;top:253.0px;" width="42" height="42" viewBox="0 0 24 24" fill="none"><polygon points="8.3,0.2 12.6,0.2 14.0,3.1 21.0,3.3 22.1,5.5 21,8.5 23.8,15.0 22.1,16.9 19.3,16.9 16.2,23.6 12.1,23.8 10.7,21.0 3.6,21.0 1.9,17.9 3.3,15.0 0.2,9.3 1.9,5.5 4.8,5.5" fill="#ced0d6" stroke="#ced0d6" stroke-width="0.8" stroke-linejoin="round"/><path d="M8.3 8 H20.7 M4.5 5.2 L10.2 17.9 M18.3 10.7 L11.4 21.9 M4.8 18.9 H9.8 M18.3 10.7 L22.4 14 M6.2 4 L9.3 1.4" stroke="#2b2d30" stroke-width="1.7" fill="none"/></svg>
<svg style="position:absolute;left:3383px;top:335px;" width="40" height="40" viewBox="0 0 40 40" fill="none"><circle cx="19" cy="19" r="16.5" stroke="#ced0d6" stroke-width="2.6"/><ellipse cx="19" cy="19" rx="7" ry="16.5" stroke="#ced0d6" stroke-width="2.4"/><path d="M2.5 13 H36 M2.5 25 H36" stroke="#ced0d6" stroke-width="2.4"/></svg>
<div style="position:absolute;left:0px;top:1296px;width:3360px;height:2px;background:#1e1f22;"></div>
<div style="position:absolute;left:0px;top:1298px;width:3360px;height:792px;background:#2b2d30;"></div>
<span class="t" style="left:-36.5px;top:1321.5px;font-size:26px;line-height:34px;color:#dfe1e5;font-weight:700;-webkit-text-stroke:0;letter-spacing:0.250px;">Services</span>
<div style="position:absolute;left:0px;top:1378px;width:3360px;height:2px;background:#1e1f22;"></div>
<div style="position:absolute;left:0px;top:1448px;width:527px;height:2px;background:#1e1f22;"></div>
<div style="position:absolute;left:525.5px;top:1380px;width:2px;height:710px;background:#1e1f22;"></div>
<div style="position:absolute;left:527px;top:1449px;width:2757px;height:641px;background:#1e1f22;"></div>
<div style="position:absolute;left:527px;top:1448px;width:2757px;height:1.5px;background:#1e1f22;"></div>
<div style="position:absolute;left:3284px;top:1448px;width:76px;height:1.5px;background:#1e1f22;"></div>
<svg style="position:absolute;left:8px;top:1398px;" width="20" height="32" viewBox="0 0 20 32" fill="none"><path d="M3 4.5 L10 12.3 L17 4.5 M3 27.7 L10 19.9 L17 27.7" stroke="#ced0d6" stroke-width="2.2" stroke-linecap="round" stroke-linejoin="round"/></svg>
<div style="position:absolute;left:50.5px;top:1394.5px;width:1.5px;height:39px;background:#43454a;"></div>
<svg style="position:absolute;left:66px;top:1398px;" width="40" height="36" viewBox="0 0 40 36" fill="none"><path d="M3 16 C9 2 27 2 33 16 C27 30 9 30 3 16 Z" stroke="#ced0d6" stroke-width="2.2" stroke-linejoin="round"/><circle cx="18" cy="16" r="5.3" stroke="#ced0d6" stroke-width="2.2"/><path d="M29 33 H36 V26 Z" fill="#ced0d6"/></svg>
<svg style="position:absolute;left:122px;top:1398px;" width="36" height="36" viewBox="0 0 36 36" fill="none"><path d="M3 4 H25 L17 14 V24 L11 27 V14 Z" stroke="#ced0d6" stroke-width="2.2" stroke-linejoin="round"/><path d="M25 33 H32 V26 Z" fill="#ced0d6"/></svg>
<svg style="position:absolute;left:172px;top:1394px;" width="36" height="36" viewBox="0 0 36 36" fill="none"><path d="M14.4 12.1 H6.1 a3 3 0 0 0 -3 3 V25.1 a3 3 0 0 0 3 3 H21.2 a3 3 0 0 0 3 -3 V21.3" stroke="#ced0d6" stroke-width="2.2" stroke-linecap="round"/><path d="M25.3 4.3 V17.7 M18.6 11 H32" stroke="#ced0d6" stroke-width="2.2" stroke-linecap="round"/></svg>
<div style="position:absolute;left:220.5px;top:1394.5px;width:1.5px;height:39px;background:#43454a;"></div>
<svg style="position:absolute;left:238px;top:1398px;" width="36" height="36" viewBox="0 0 36 36" fill="none"><path d="M15 3 V27 M3 15 H27" stroke="#ced0d6" stroke-width="2.2" stroke-linecap="round"/><path d="M26 34 H33 V27 Z" fill="#ced0d6"/></svg>
<div style="position:absolute;left:0px;top:1506px;width:502px;height:48px;background:#43454a;border-radius:0 9px 9px 0;"></div>
<svg style="position:absolute;left:6px;top:1467px;" width="34" height="34" viewBox="0 0 34 34" fill="none"><path d="M26.6 2.1 C25.5 7 22 9 15 10.5 C7 12 2.3 15.5 2.3 20.5 C2.3 25.5 6 28.3 11 28.3 L20 28.3 L30 17 C30 11 28.5 7 26.600 2.100 Z" fill="#253627" stroke="#57965c" stroke-width="2" stroke-linejoin="round"/><path d="M4 26.3 C8 27 13 26 17.5 23.8" stroke="#57965c" stroke-width="2" stroke-linecap="round" fill="none"/><circle cx="25.3" cy="24" r="8.3" fill="#2b2d30"/><path d="M22.1 20.3 a5.2 5.2 0 1 0 6.4 0 M25.3 17.7 v6" stroke="#dfe1e5" stroke-width="2" stroke-linecap="round" fill="none"/></svg>
<span class="t" style="left:44.5px;top:1465.5px;font-size:26px;line-height:34px;color:#dfe1e5;letter-spacing:0.648px;">Spring Boot</span>
<svg style="position:absolute;left:47.0px;top:1515.3px;" width="27.5" height="29.6" viewBox="0 0 26 28" fill="none"><path d="M3 3.2 a1.2 1.2 0 0 1 1.8 -1 l18 10.8 a1.2 1.2 0 0 1 0 2 l-18 10.8 a1.2 1.2 0 0 1 -1.8 -1 z" fill="#253627" stroke="#57965c" stroke-width="2" stroke-linejoin="round"/></svg>
<span class="t" style="left:82.5px;top:1513.5px;font-size:26px;line-height:34px;color:#dfe1e5;font-weight:700;-webkit-text-stroke:0;letter-spacing:0.253px;">ClientWebfluxApplication</span>
<svg style="position:absolute;left:47.0px;top:1563.3px;" width="27.5" height="29.6" viewBox="0 0 26 28" fill="none"><path d="M3 3.2 a1.2 1.2 0 0 1 1.8 -1 l18 10.8 a1.2 1.2 0 0 1 0 2 l-18 10.8 a1.2 1.2 0 0 1 -1.8 -1 z" fill="#253627" stroke="#57965c" stroke-width="2" stroke-linejoin="round"/></svg>
<span class="t" style="left:82.5px;top:1561.5px;font-size:26px;line-height:34px;color:#dfe1e5;font-weight:700;-webkit-text-stroke:0;letter-spacing:0.129px;">RestfulApplication</span>
<svg style="position:absolute;left:47.0px;top:1611.3px;" width="27.5" height="29.6" viewBox="0 0 26 28" fill="none"><path d="M3 3.2 a1.2 1.2 0 0 1 1.8 -1 l18 10.8 a1.2 1.2 0 0 1 0 2 l-18 10.8 a1.2 1.2 0 0 1 -1.8 -1 z" fill="#253627" stroke="#57965c" stroke-width="2" stroke-linejoin="round"/></svg>
<span class="t" style="left:82.5px;top:1609.5px;font-size:26px;line-height:34px;color:#dfe1e5;font-weight:700;-webkit-text-stroke:0;letter-spacing:0.285px;">ServerWebfluxApplication</span>
<svg style="position:absolute;left:46px;top:1659px;" width="34" height="34" viewBox="0 0 34 34" fill="none"><path d="M26.6 2.1 C25.5 7 22 9 15 10.5 C7 12 2.3 15.5 2.3 20.5 C2.3 25.5 6 28.3 11 28.3 L20 28.3 L30 17 C30 11 28.5 7 26.600 2.100 Z" fill="#2c302e" stroke="#4a604d" stroke-width="2" stroke-linejoin="round"/><path d="M4 26.3 C8 27 13 26 17.5 23.8" stroke="#4a604d" stroke-width="2" stroke-linecap="round" fill="none"/><circle cx="25.3" cy="24" r="8.3" fill="#2b2d30"/><path d="M22.1 20.3 a5.2 5.2 0 1 0 6.4 0 M25.3 17.7 v6" stroke="#8c8f96" stroke-width="2" stroke-linecap="round" fill="none"/></svg>
<span class="t" style="left:82.5px;top:1657.5px;font-size:26px;line-height:34px;color:#dfe1e5;font-weight:700;-webkit-text-stroke:0;letter-spacing:0.336px;">ServerWebfluxApplication2</span>
<svg style="position:absolute;left:6px;top:1706px;" width="36" height="34" viewBox="0 0 36 34" fill="none"><path d="M3 17 H27 c2 0 3-1 3.5-2.5 c-1 8-6 13-14 13 C8 27.5 3.5 24 3 17 Z" fill="#3574f0"/><rect x="6" y="10" width="6" height="6" fill="#3574f0"/><rect x="13" y="10" width="6" height="6" fill="#3574f0"/><rect x="13" y="3" width="6" height="6" fill="#3574f0"/><path d="M23 2 L31 10 M31 2 L23 10" stroke="#db5c5c" stroke-width="2.2" stroke-linecap="round"/></svg>
<span class="t" style="left:44.5px;top:1705.5px;font-size:26px;line-height:34px;color:#dfe1e5;letter-spacing:0.607px;">Docker</span>
<span class="t" style="left:555.0px;top:1397.0px;font-size:26px;line-height:34px;color:#dfe1e5;letter-spacing:0.371px;">Console</span>
<div style="position:absolute;left:528px;top:1445.5px;width:154px;height:4px;background:#5a5d63;"></div>
<svg style="position:absolute;left:703px;top:1398px;" width="34" height="34" viewBox="0 0 34 34" fill="none"><circle cx="18" cy="16" r="13" stroke="#c77d55" stroke-width="2.2"/><circle cx="18" cy="16" r="4.6" stroke="#c77d55" stroke-width="2.2"/><path d="M1 16 H13" stroke="#c77d55" stroke-width="2.2" stroke-linecap="round"/></svg>
<span class="t" style="left:746.0px;top:1397.0px;font-size:26px;line-height:34px;color:#dfe1e5;letter-spacing:1.146px;">Actuator</span>
<svg style="position:absolute;left:886px;top:1398.5px;" width="34" height="36" viewBox="0 0 34 36" fill="none"><path d="M24 8 A11.5 11.5 0 1 0 26.5 17" stroke="#ced0d6" stroke-width="2.2" stroke-linecap="round" fill="none"/><path d="M18 8.5 H25 V1.5" stroke="#ced0d6" stroke-width="2.2" stroke-linecap="round" stroke-linejoin="round" fill="none"/><path d="M16 17 V31 L28 24 Z" fill="#2b2d30" stroke="#2b2d30" stroke-width="5"/><path d="M17 17.5 V30.5 L28 24 Z" fill="#253627" stroke="#57965c" stroke-width="2" stroke-linejoin="round"/></svg>
<svg style="position:absolute;left:940px;top:1398.5px;" width="34" height="36" viewBox="0 0 34 36" fill="none"><path d="M24 8 A11.5 11.5 0 1 0 26.5 17" stroke="#ced0d6" stroke-width="2.2" stroke-linecap="round" fill="none"/><path d="M18 8.5 H25 V1.5" stroke="#ced0d6" stroke-width="2.2" stroke-linecap="round" stroke-linejoin="round" fill="none"/><circle cx="22" cy="24" r="9" fill="#2b2d30"/><ellipse cx="22" cy="25" rx="4.6" ry="5.6" fill="#253627" stroke="#57965c" stroke-width="2"/><path d="M19 19 a3 3 0 0 1 6 0 M14.5 21 l3.5 2 M29.5 21 l-3.5 2 M14 27 h3.4 M30 27 h-3.4 M15 32 l3.2-2.4 M29 32 l-3.2-2.4" stroke="#57965c" stroke-width="1.8" stroke-linecap="round" fill="none"/></svg>
<div style="position:absolute;left:994px;top:1402px;width:24px;height:24px;background:#5e3838;border:2px solid #db5c5c;border-radius:4px;box-sizing:border-box;"></div>
<div style="position:absolute;left:1038px;top:1394.5px;width:1.5px;height:39px;background:#43454a;"></div>
<svg style="position:absolute;left:1056px;top:1399.5px;" width="32" height="32" viewBox="0 0 32 32" fill="none"><path d="M3 9 a2.5 2.5 0 0 1 2.5 -2.5 H9.5 L12 3 H20 L22.5 6.5 H26.5 a2.5 2.5 0 0 1 2.5 2.5 V24 a2.5 2.5 0 0 1 -2.5 2.5 H5.5 a2.5 2.5 0 0 1 -2.5 -2.5 Z" stroke="#ced0d6" stroke-width="2.2" stroke-linejoin="round"/><circle cx="16" cy="16" r="5" stroke="#ced0d6" stroke-width="2.2"/></svg>
<svg style="position:absolute;left:1110px;top:1398px;" width="30" height="32" viewBox="0 0 30 32" fill="none"><path d="M8 9 V5 a2 2 0 0 1 2 -2 H25 a2 2 0 0 1 2 2 V27 a2 2 0 0 1 -2 2 H10 a2 2 0 0 1 -2 -2 V23" stroke="#ced0d6" stroke-width="2.2" stroke-linecap="round"/><path d="M1 16 H17 M11.5 10 L17.5 16 L11.5 22" stroke="#db5c5c" stroke-width="2.2" stroke-linecap="round" stroke-linejoin="round"/></svg>
<svg style="position:absolute;left:1159px;top:1398px;" width="38" height="36" viewBox="0 0 38 36" fill="none"><path d="M6 26 A13.5 13.5 0 1 1 30 26 Z" stroke="#ced0d6" stroke-width="2.2" stroke-linejoin="round"/><circle cx="17" cy="20" r="3" stroke="#ced0d6" stroke-width="2"/><path d="M19 18 L24 12" stroke="#ced0d6" stroke-width="2" stroke-linecap="round"/><path d="M29 35 H36 V28 Z" fill="#ced0d6"/></svg>
<div style="position:absolute;left:1225.5px;top:1402px;width:4px;height:4px;background:#ced0d6;border-radius:50%;"></div>
<div style="position:absolute;left:1225.5px;top:1412px;width:4px;height:4px;background:#ced0d6;border-radius:50%;"></div>
<div style="position:absolute;left:1225.5px;top:1422px;width:4px;height:4px;background:#ced0d6;border-radius:50%;"></div>
<svg style="position:absolute;left:3308px;top:1470px;" width="28" height="32" viewBox="0 0 28 32" fill="none"><path d="M14 27 V5 M5 14 L14 5 L23 14" stroke="#5a5d63" stroke-width="2.2" stroke-linecap="round" stroke-linejoin="round"/></svg>
<svg style="position:absolute;left:3308px;top:1522px;" width="28" height="32" viewBox="0 0 28 32" fill="none"><path d="M14 5 V27 M5 18 L14 27 L23 18" stroke="#5a5d63" stroke-width="2.2" stroke-linecap="round" stroke-linejoin="round"/></svg>
<svg style="position:absolute;left:3306px;top:1578px;" width="32" height="28" viewBox="0 0 32 28" fill="none"><path d="M2 3 H30 M2 13 H24 a5 5 0 0 1 0 10 H17 M2 23 H11 M21 19 L16.5 23 L21 27" stroke="#ced0d6" stroke-width="2.2" stroke-linecap="round" stroke-linejoin="round"/></svg>
<div style="position:absolute;left:3300px;top:1620px;width:44px;height:44px;background:#43454a;border-radius:8px;"></div>
<svg style="position:absolute;left:3306px;top:1628px;" width="32" height="28" viewBox="0 0 32 28" fill="none"><path d="M2 4 H12 M2 13 H12 M2 25 H30 M22 2 V18 M15 11.5 L22 18.5 L29 11.5" stroke="#ced0d6" stroke-width="2.2" stroke-linecap="round" stroke-linejoin="round"/></svg>
<svg style="position:absolute;left:3306px;top:1679px;" width="32" height="30" viewBox="0 0 32 30" fill="none"><path d="M8 11 V3 H24 V11 M8 22 H4.5 a2.5 2.5 0 0 1 -2.5 -2.5 V13.5 a2.5 2.5 0 0 1 2.5 -2.5 H27.5 a2.5 2.5 0 0 1 2.5 2.5 V19.5 a2.5 2.5 0 0 1 -2.5 2.5 H24 M8 18 H24 V28 H8 Z" stroke="#ced0d6" stroke-width="2.2" stroke-linejoin="round"/></svg>
<svg style="position:absolute;left:3308px;top:1730px;" width="28" height="32" viewBox="0 0 28 32" fill="none"><path d="M2 8 H26 M9 8 V4.5 a1.5 1.5 0 0 1 1.5 -1.5 h7 a1.5 1.5 0 0 1 1.5 1.5 V8 M4.5 8 L6 27 a2.5 2.5 0 0 0 2.5 2.3 h11 a2.5 2.5 0 0 0 2.5 -2.3 L23.500 8 M11 14 V23 M17 14 V23" stroke="#ced0d6" stroke-width="2.2" stroke-linecap="round" stroke-linejoin="round"/></svg>
<div class="clip" style="left:527px;top:1449.5px;width:2756px;height:641px;background:#1e1f22">
<div class="m" style="left:23.30px;top:-16.75px">2025-05-13T11:12:54.711+08:00 <span class="lv"> INFO</span> <span class="pid">54448</span> --- [mcp-client-webflux] [ient-1-worker-2] <span class="lg">i.m.client.McpAsyncClient               </span> : Server response with Protocol: 2024-11-05, Capa</div>
<div class="m" style="left:23.30px;top:27.25px">2025-05-13T11:12:54.723+08:00 <span class="lv">DEBUG</span> <span class="pid">54448</span> --- [mcp-client-webflux] [onPool-worker-1] <span class="lg">i.m.c.t.WebFluxSseClientTransport       </span> : Message sent successfully</div>
<div class="m" style="left:23.30px;top:71.25px">2025-05-13T11:12:54.723+08:00 <span class="lv"> INFO</span> <span class="pid">54448</span> --- [mcp-client-webflux] [           main] <span class="lg">a.c.a.m.n.c.t.LoadbalancedMcpAsyncClient</span> : Added McpAsyncClient: mcp-client-webflux - mcp-</div>
<div class="m" style="left:23.30px;top:115.25px">2025-05-13T11:12:55.191+08:00 <span class="lv"> INFO</span> <span class="pid">54448</span> --- [mcp-client-webflux] [           main] <span class="lg">o.s.a.m.s.a.McpServerAutoConfiguration  </span> : Registered tools: 1, notification: true</div>
<div class="m" style="left:23.30px;top:159.25px">2025-05-13T11:12:55.298+08:00 <span class="lv"> INFO</span> <span class="pid">54448</span> --- [mcp-client-webflux] [           main] <span class="lg">o.s.b.w.embedded.tomcat.TomcatWebServer </span> : Tomcat started on port 8080 (http) with context</div>
<div class="m" style="left:23.30px;top:203.25px">2025-05-13T11:12:55.309+08:00 <span class="lv"> INFO</span> <span class="pid">54448</span> --- [mcp-client-webflux] [           main] <span class="lg">c.y.m.c.w.ClientWebfluxApplication      </span> : Started ClientWebfluxApplication in 3.622 secon</div>
<div class="m" style="left:23.30px;top:290.25px">&gt;&gt;&gt; QUESTION: <span class="in" style="letter-spacing:0">北京时间现在几点钟</span></div>
<div class="m" style="left:23.30px;top:335.25px">2025-05-13T11:13:05.618+08:00 <span class="lv">DEBUG</span> <span class="pid">54448</span> --- [mcp-client-webflux] [ient-1-Worker-1] <span class="lg">io.modelcontextprotocol.spec.McpSchema  </span> : Received JSON message: {"jsonrpc":"2.0","id":"8</div>
<div class="m" style="left:23.30px;top:379.25px">2025-05-13T11:13:05.619+08:00 <span class="lv">DEBUG</span> <span class="pid">54448</span> --- [mcp-client-webflux] [ient-1-Worker-1] <span class="lg">i.m.spec.McpClientSession               </span> : Received Response: JSONRPCResponse[jsonrpc=2.0,</div>
<div class="m" style="left:23.30px;top:423.25px">2025-05-13T11:13:05.622+08:00 <span class="lv">DEBUG</span> <span class="pid">54448</span> --- [mcp-client-webflux] [onPool-worker-1] <span class="lg">i.m.c.t.WebFluxSseClientTransport       </span> : Message sent successfully</div>
<div class="m" style="left:23.30px;top:509.25px">&gt;&gt;&gt; ASSISTANT: <span style="letter-spacing:0">当前北京时间是</span> 2025-05-13 11:13:05 CST<span style="letter-spacing:0">。</span></div>
<div class="m" style="left:23.30px;top:599.25px">&gt;&gt;&gt; QUESTION: </div>
</div>
</body></html>
